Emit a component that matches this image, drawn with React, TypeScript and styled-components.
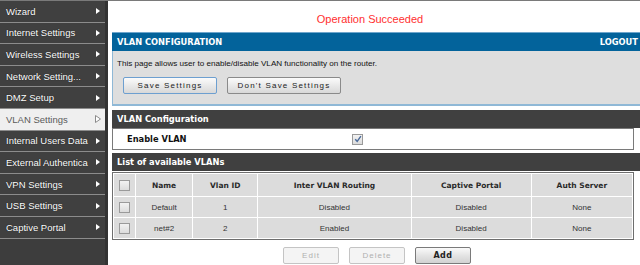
import styled, { createGlobalStyle } from 'styled-components';

const GlobalStyle = createGlobalStyle`
  html, body {
    margin: 0;
    padding: 0;
    background: #ffffff;
    overflow: hidden;
  }
`;

const Page = styled.div`
  display: flex;
  width: 640px;
  height: 265px;
  border-top: 1px solid #7a7a7a;
  box-sizing: border-box;
  overflow: hidden;
`;

const Sidebar = styled.nav`
  width: 105px;
  flex-shrink: 0;
  background: #3d3d3d;
  border-right: 3px solid #333333;
  display: flex;
  flex-direction: column;
`;

const NavItem = styled.div<{ $active?: boolean }>`
  height: 20.6px;
  border-bottom: 1px solid #8c8c8c;
  display: flex;
  align-items: center;
  justify-content: space-between;
  padding: 0 4px 0 6px;
  font-family: 'Liberation Sans', Arial, sans-serif;
  font-size: 9.5px;
  white-space: nowrap;
  color: ${(p) => (p.$active ? '#5a5a5a' : '#ffffff')};
  background: ${(p) => (p.$active ? '#efefef' : '#404040')};
  text-shadow: ${(p) => (p.$active ? 'none' : '0 0 1px #111')};
`;

const Main = styled.main`
  flex: 1;
  padding-left: 4px;
  overflow: hidden;
  font-family: 'Liberation Sans', Arial, sans-serif;
`;

const Status = styled.div`
  height: 31px;
  display: flex;
  align-items: center;
  justify-content: center;
  padding: 4px 12px 0 0;
  box-sizing: border-box;
  color: #ff3030;
  font-size: 11px;
`;

const Panel = styled.section`
  width: 528px;
`;

const BlueBar = styled.div`
  height: 18px;
  background: #03639b;
  border-top: 1px solid #6fa6cc;
  display: flex;
  align-items: center;
  justify-content: space-between;
  padding: 0 2px 0 5px;
  color: #ffffff;
  font-family: 'DejaVu Sans', Verdana, sans-serif;
  font-weight: bold;
  font-size: 8.3px;
`;

const IntroBox = styled.div`
  background: #dedede;
  border-left: 1px solid #8fb8d6;
  border-bottom: 2px solid #8fb8d6;
  height: 55px;
  padding: 8px 0 0 4px;
  box-sizing: border-box;
`;

const Intro = styled.p`
  margin: 0 0 9px;
  font-size: 8.1px;
  color: #111;
`;

const ButtonRow = styled.div`
  display: flex;
  gap: 10px;
  padding-left: 6px;
`;

const Button = styled.button<{ $primary?: boolean; $width: number }>`
  width: ${(p) => p.$width}px;
  height: 17px;
  padding: 0;
  border-radius: 2px;
  border: 1px solid ${(p) => (p.$primary ? '#6d9fd0' : '#8a8a8a')};
  background: linear-gradient(#fbfbfb, #e9e9e9 50%, #d8d8d8);
  font-family: 'Liberation Sans', Arial, sans-serif;
  font-size: 8px;
  letter-spacing: 1.2px;
  color: #222;
`;

const DarkBar = styled.div<{ $gap: number }>`
  margin-top: ${(p) => p.$gap}px;
  height: 18px;
  background: #404040;
  display: flex;
  align-items: center;
  padding-left: 5px;
  color: #ffffff;
  font-family: 'DejaVu Sans', Verdana, sans-serif;
  font-weight: bold;
  font-size: 8.3px;
`;

const EnableRow = styled.div`
  width: 522px;
  height: 22px;
  box-sizing: border-box;
  border: 1px solid #7a7a7a;
  display: flex;
  align-items: center;
  padding-left: 14px;
  font-family: 'DejaVu Sans', Verdana, sans-serif;
  font-weight: bold;
  font-size: 8.3px;
  color: #111;
`;

const EnableLabel = styled.span`
  width: 225px;
`;

const Table = styled.table`
  width: 522px;
  margin-top: 1px;
  border: 1px solid #6e6e6e;
  border-spacing: 1px;
  background: #ffffff;
  table-layout: fixed;
  font-size: 8px;
`;

const Th = styled.th<{ $w: number }>`
  width: ${(p) => p.$w}px;
  height: 22px;
  background: #dcdcdc;
  font-family: 'DejaVu Sans', Verdana, sans-serif;
  font-size: 7.5px;
  font-weight: bold;
  color: #2a2a2a;
  padding: 0;
`;

const Td = styled.td`
  height: 20px;
  background: #dcdcdc;
  text-align: center;
  color: #333;
  padding: 0;
`;

const Box = styled.span`
  display: inline-flex;
  align-items: center;
  justify-content: center;
  width: 9px;
  height: 9px;
  border: 1px solid #9a9a9a;
  background: linear-gradient(#f2f2f2, #dcdcdc);
  vertical-align: middle;
`;

const Actions = styled.div`
  width: 522px;
  display: flex;
  justify-content: center;
  gap: 10px;
  margin-top: 7px;
  padding-left: 8px;
  box-sizing: border-box;
`;

const ActionButton = styled.button<{ $disabled?: boolean }>`
  width: 56px;
  height: 17px;
  padding: 0;
  border-radius: 2px;
  border: 1px solid ${(p) => (p.$disabled ? '#c4c4c4' : '#7a7a7a')};
  background: ${(p) => (p.$disabled ? '#f4f4f4' : 'linear-gradient(#fafafa, #e4e4e4 50%, #d2d2d2)')};
  font-family: ${(p) => (p.$disabled ? "'Liberation Sans', Arial, sans-serif" : "'DejaVu Sans', Verdana, sans-serif")};
  font-weight: ${(p) => (p.$disabled ? 'normal' : 'bold')};
  font-size: 8px;
  letter-spacing: ${(p) => (p.$disabled ? '1px' : '0.5px')};
  color: ${(p) => (p.$disabled ? '#b0b0b0' : '#222')};
`;

const Arrow = ({ hollow }: { hollow?: boolean }) => (
  <svg width="6" height="8" viewBox="0 0 6 8">
    {hollow ? (
      <polygon points="0.5,0.5 5.5,4 0.5,7.5" fill="#ffffff" stroke="#8a8a8a" strokeWidth="1" />
    ) : (
      <polygon points="1,1 5,4 1,7" fill="#ffffff" />
    )}
  </svg>
);

const Check = () => (
  <svg width="8" height="8" viewBox="0 0 8 8">
    <path d="M1.2 4.2 L3.2 6.3 L6.9 1.2" fill="none" stroke="#4a6a9a" strokeWidth="1.4" />
  </svg>
);

const menu = [
  'Wizard',
  'Internet Settings',
  'Wireless Settings',
  'Network Setting...',
  'DMZ Setup',
  'VLAN Settings',
  'Internal Users Data',
  'External Authentica',
  'VPN Settings',
  'USB Settings',
  'Captive Portal',
];

const columns = [
  { label: '', w: 21 },
  { label: 'Name', w: 56 },
  { label: 'Vlan ID', w: 64 },
  { label: 'Inter VLAN Routing', w: 152 },
  { label: 'Captive Portal', w: 119 },
  { label: 'Auth Server', w: 100 },
];

const vlans = [
  { name: 'Default', id: 1, routing: 'Disabled', portal: 'Disabled', auth: 'None' },
  { name: 'net#2', id: 2, routing: 'Enabled', portal: 'Disabled', auth: 'None' },
];

export default function App() {
  return (
    <>
      <GlobalStyle />
      <Page>
        <Sidebar>
          {menu.map((label) => (
            <NavItem key={label} $active={label === 'VLAN Settings'}>
              <span>{label}</span>
              <Arrow hollow={label === 'VLAN Settings'} />
            </NavItem>
          ))}
        </Sidebar>
        <Main>
          <Status>Operation Succeeded</Status>
          <Panel>
            <BlueBar>
              <span>VLAN CONFIGURATION</span>
              <span>LOGOUT</span>
            </BlueBar>
            <IntroBox>
              <Intro>This page allows user to enable/disable VLAN functionality on the router.</Intro>
              <ButtonRow>
                <Button $primary $width={94}>Save Settings</Button>
                <Button $width={114}>Don't Save Settings</Button>
              </ButtonRow>
            </IntroBox>
            <DarkBar $gap={4}>VLAN Configuration</DarkBar>
            <EnableRow>
              <EnableLabel>Enable VLAN</EnableLabel>
              <Box>
                <Check />
              </Box>
            </EnableRow>
            <DarkBar $gap={3}>List of available VLANs</DarkBar>
            <Table>
              <thead>
                <tr>
                  {columns.map((c, i) => (
                    <Th key={i} $w={c.w}>
                      {i === 0 ? <Box /> : c.label}
                    </Th>
                  ))}
                </tr>
              </thead>
              <tbody>
                {vlans.map((v) => (
                  <tr key={v.name}>
                    <Td>
                      <Box />
                    </Td>
                    <Td>{v.name}</Td>
                    <Td>{v.id}</Td>
                    <Td>{v.routing}</Td>
                    <Td>{v.portal}</Td>
                    <Td>{v.auth}</Td>
                  </tr>
                ))}
              </tbody>
            </Table>
            <Actions>
              <ActionButton $disabled>Edit</ActionButton>
              <ActionButton $disabled>Delete</ActionButton>
              <ActionButton>Add</ActionButton>
            </Actions>
          </Panel>
        </Main>
      </Page>
    </>
  );
}
